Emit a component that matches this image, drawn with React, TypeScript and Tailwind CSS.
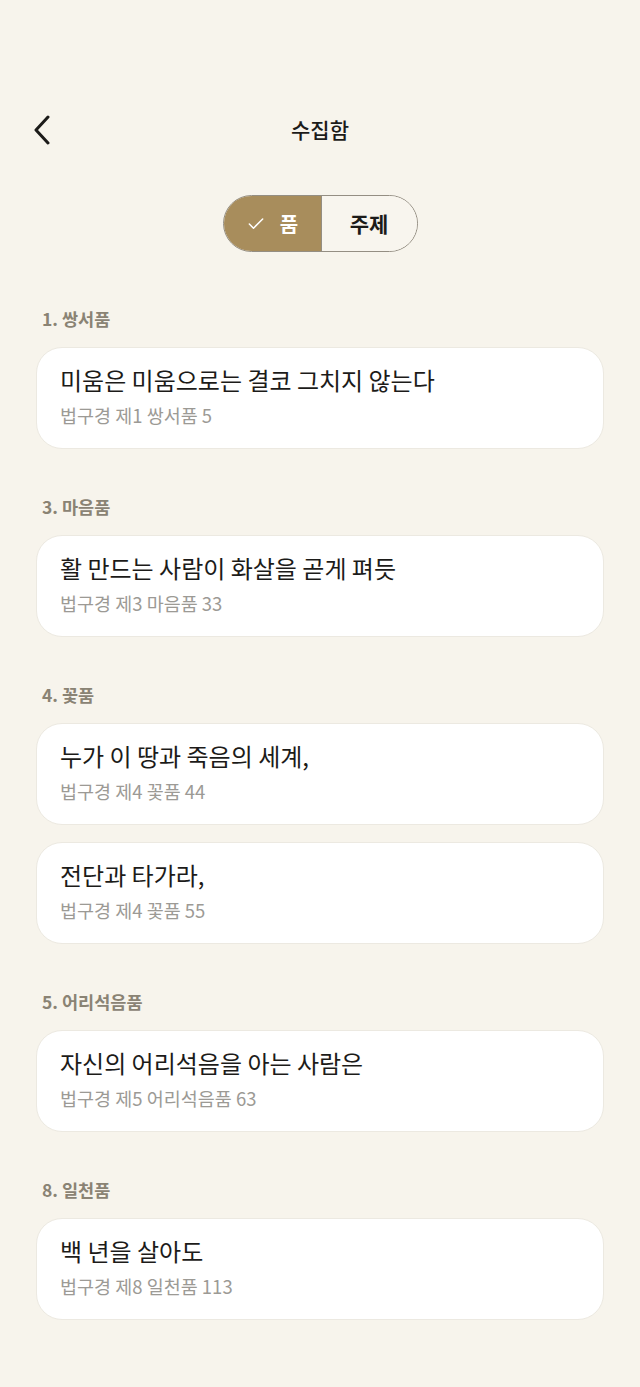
import { Check } from 'lucide-react'

const sections = [
  {
    label: '1. 쌍서품',
    items: [{ text: '미움은 미움으로는 결코 그치지 않는다', src: '법구경 제1 쌍서품 5' }],
  },
  {
    label: '3. 마음품',
    items: [{ text: '활 만드는 사람이 화살을 곧게 펴듯', src: '법구경 제3 마음품 33' }],
  },
  {
    label: '4. 꽃품',
    items: [
      { text: '누가 이 땅과 죽음의 세계,', src: '법구경 제4 꽃품 44' },
      { text: '전단과 타가라,', src: '법구경 제4 꽃품 55' },
    ],
  },
  {
    label: '5. 어리석음품',
    items: [{ text: '자신의 어리석음을 아는 사람은', src: '법구경 제5 어리석음품 63' }],
  },
  {
    label: '8. 일천품',
    items: [{ text: '백 년을 살아도', src: '법구경 제8 일천품 113' }],
  },
]

export default function App() {
  return (
    <div
      className="min-h-[1387px] w-full bg-[#f7f4ec] pt-[100px] text-[#1c1b19]"
      style={{ fontFamily: '"Noto Sans CJK KR", "Noto Sans", sans-serif' }}
    >
      <header className="grid h-[60px] grid-cols-[1fr_auto_1fr] items-center px-[30px]">
        <button className="flex h-[40px] w-[24px] items-center justify-center justify-self-start">
          <svg width="18" height="30" viewBox="0 0 18 30" fill="none">
            <path d="M15 2 L3 15 L15 28" stroke="#1c1b19" strokeWidth="3" strokeLinecap="round" strokeLinejoin="round" />
          </svg>
        </button>
        <span className="text-[21px] font-medium">수집함</span>
        <span />
      </header>

      <div className="flex justify-center pt-[35px]">
        <div className="flex h-[57px] overflow-hidden rounded-full border border-[#948e83]">
          <div className="flex w-[97px] items-center justify-center gap-[14px] bg-[#a88d5c] text-white">
            <Check size={20} strokeWidth={1.8} />
            <span className="text-[20px] font-bold">품</span>
          </div>
          <div className="flex w-[96px] items-center justify-center border-l border-[#948e83] bg-[#f8f5ee]">
            <span className="text-[21px] font-bold">주제</span>
          </div>
        </div>
      </div>

      <main className="flex flex-col gap-[48px] px-[36px] pt-[57px] pb-[60px]">
        {sections.map(s => (
          <section key={s.label}>
            <h2 className="mb-[18px] px-[6px] text-[17.5px] leading-[20px] font-semibold text-[#8a8374]">{s.label}</h2>
            <div className="flex flex-col gap-[17px]">
              {s.items.map(it => (
                <div
                  key={it.src}
                  className="rounded-[26px] border border-[#ece9e1] bg-white px-[23px] pt-[18px] pb-[22px]"
                >
                  <p className="text-[24px] leading-[28px] text-[#1c1b19]">{it.text}</p>
                  <p className="mt-[10px] text-[18.5px] leading-[22px] text-[#9c9a95]">{it.src}</p>
                </div>
              ))}
            </div>
          </section>
        ))}
      </main>
    </div>
  )
}
